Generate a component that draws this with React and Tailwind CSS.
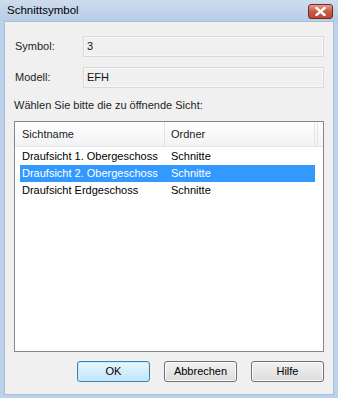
import React from "react";

const font = { fontFamily: '"Liberation Sans", Arial, sans-serif' };

function Field({ label, value }) {
  return (
    <div className="flex items-center h-[21px]">
      <div className="w-[78px] pl-[10px] text-[11px] text-[#1e1e1e]">{label}</div>
      <div className="flex-1 h-[21px] mr-[9px] border border-[#d9d9d9] bg-[#f0f0f0] text-[11px] text-[#111] px-[3px] flex items-center shadow-[inset_0_0_0_1px_#f7f7f7]">
        {value}
      </div>
    </div>
  );
}

const rows = [
  ["Draufsicht 1. Obergeschoss", "Schnitte", false],
  ["Draufsicht 2. Obergeschoss", "Schnitte", true],
  ["Draufsicht Erdgeschoss", "Schnitte", false],
];

function Btn({ children, def }) {
  return (
    <div
      className={
        "w-[73px] h-[21px] rounded-[3px] border flex items-center justify-center text-[11px] text-black " +
        (def
          ? "border-[#3c7fb1] bg-gradient-to-b from-[#eaf6fd] to-[#bee6fd] shadow-[inset_0_0_0_1px_#cbe9fb]"
          : "border-[#707070] bg-gradient-to-b from-[#f2f2f2] to-[#dddddd] shadow-[inset_0_0_0_1px_#fcfcfc]")
      }
    >
      {children}
    </div>
  );
}

export default function App() {
  return (
    <div className="w-[338px] h-[398px] bg-[#bcd2ec] flex flex-col" style={font}>
      <div className="h-[21px] flex items-center justify-between pl-[7px] pr-[5px] bg-gradient-to-b from-[#cfdcee] to-[#b7cce6]">
        <span className="text-[11.5px] text-black">Schnittsymbol</span>
        <div className="w-[25px] h-[15px] mt-[1px] rounded-[3px] border border-[#6d2a22] bg-gradient-to-b from-[#e3a092] via-[#c75a45] to-[#c2482f] flex items-center justify-center">
          <svg width="11" height="9" viewBox="0 0 11 9">
            <path d="M1.5 1 L9.5 8 M9.5 1 L1.5 8" stroke="#fff" strokeWidth="2.4" strokeLinecap="square" />
          </svg>
        </div>
      </div>
      <div className="flex-1 mx-[4px] mb-[3px] bg-[#f0f0f0] border border-[#a9bdd6] flex flex-col">
        <div className="flex flex-col gap-[10px] pt-[14px]">
          <Field label="Symbol:" value="3" />
          <Field label="Modell:" value="EFH" />
        </div>
        <div className="pl-[9px] pt-[7px] text-[11px] text-[#1e1e1e] h-[27px] flex items-center whitespace-nowrap">
          Wählen Sie bitte die zu öffnende Sicht:
        </div>
        <div className="mx-[9px] mt-[6px] h-[231px] border border-[#828790] bg-white flex flex-col">
          <div className="h-[25px] flex text-[11px] text-[#1e1e1e] bg-gradient-to-b from-white to-[#f2f3f5] border-b border-[#e5e5e5]">
            <div className="w-[150px] pl-[7px] flex items-center border-r border-[#e3e3e3]">Sichtname</div>
            <div className="w-[150px] pl-[6px] flex items-center border-r border-[#e3e3e3]">Ordner</div>
            <div className="w-[3px] border-r border-[#e3e3e3]"></div>
          </div>
          <div className="flex flex-col pt-[1px] pl-[5px] pr-[8px]">
            {rows.map(([a, b, sel]) => (
              <div
                key={a}
                className={
                  "h-[17px] flex items-center text-[11px] whitespace-nowrap " +
                  (sel ? "bg-[#3399ff] text-white" : "text-black")
                }
              >
                <div className="w-[145px] pl-[2px]">{a}</div>
                <div className="pl-[6px]">{b}</div>
              </div>
            ))}
          </div>
        </div>
        <div className="flex justify-end gap-[14px] pr-[9px] pt-[9px]">
          <Btn def>OK</Btn>
          <Btn>Abbrechen</Btn>
          <Btn>Hilfe</Btn>
        </div>
      </div>
    </div>
  );
}
